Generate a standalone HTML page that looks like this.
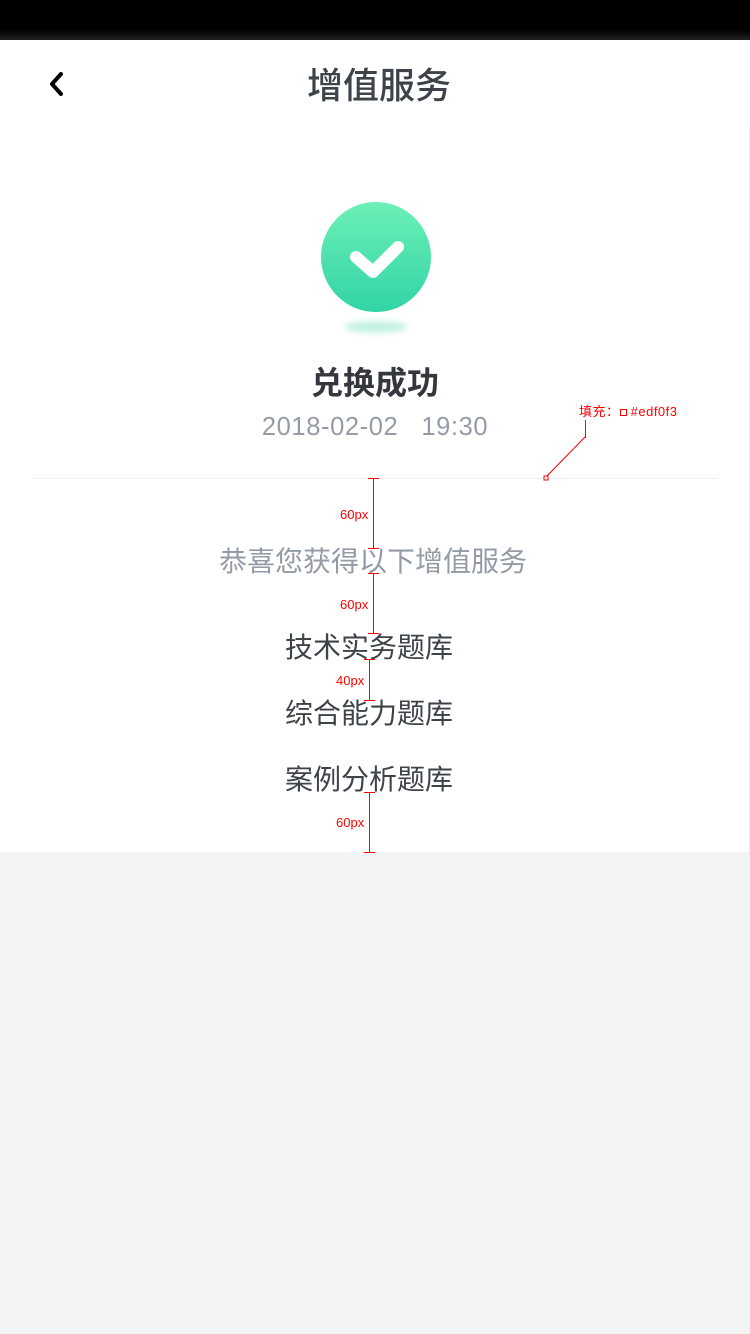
<!DOCTYPE html>
<html><head><meta charset="utf-8"><style>
*{margin:0;padding:0;box-sizing:border-box}
body{width:750px;height:1334px;background:#f2f3f5;position:relative;overflow:hidden;font-family:"Liberation Sans","Noto Sans CJK SC",sans-serif}
.a{position:absolute}
.t{position:absolute;left:0;width:750px;text-align:center;white-space:nowrap}
.r{position:absolute;background:#f00}
.rl{position:absolute;color:#f00;font-size:13px}
</style></head><body>
<div class="a" style="left:0;top:0;width:750px;height:40px;background:linear-gradient(#000 0,#000 30px,#222 40px)"></div>
<div class="a" style="left:0;top:40px;width:750px;height:88px;background:#fff;box-shadow:0 2px 6px rgba(0,0,0,0.05)"></div>
<svg class="a" style="left:46px;top:72px" width="20" height="24" viewBox="0 0 20 24"><path d="M15 2 L6 12 L15 22" fill="none" stroke="#000" stroke-width="4" stroke-linecap="round" stroke-linejoin="round"/></svg>
<div class="t" style="top:63px;left:4px;font-size:36px;line-height:46px;color:#3e434a;font-weight:500">增值服务</div>
<div class="a" style="left:0;top:128px;width:750px;height:724px;background:#fff;border-right:1px solid #eceef1"></div>
<div class="a" style="left:321px;top:202px;width:110px;height:110px;border-radius:50%;background:linear-gradient(#6df0b6,#31d4a6)"></div>
<svg class="a" style="left:321px;top:202px" width="110" height="110"><path d="M35 55 L52 70 L77 45" fill="none" stroke="#fff" stroke-width="12" stroke-linecap="round" stroke-linejoin="round"/></svg>
<div class="a" style="left:344px;top:321px;width:64px;height:12px;border-radius:50%;background:#c4f1e2;filter:blur(3px)"></div>
<div class="t" style="top:362px;font-size:32px;line-height:42px;color:#34383e;font-weight:600;">兑换成功</div>
<div class="t" style="top:411px;font-size:25.5px;line-height:32px;color:#949ba7;letter-spacing:0.6px">2018-02-02&nbsp;&nbsp;&nbsp;19:30</div>
<div class="a" style="left:32px;top:478px;width:686px;height:1px;background:#edf0f3"></div>
<div class="t" style="top:543px;left:-2px;font-size:28px;line-height:38px;color:#949ba7">恭喜您获得以下增值服务</div>
<div class="t" style="top:629px;left:-6px;font-size:28px;line-height:38px;color:#3e434a">技术实务题库</div>
<div class="t" style="top:695px;left:-6px;font-size:28px;line-height:38px;color:#3e434a">综合能力题库</div>
<div class="t" style="top:761px;left:-6px;font-size:28px;line-height:38px;color:#3e434a">案例分析题库</div>
<div class="rl" style="left:579px;top:401px;font-size:13px;letter-spacing:0.5px">填充：<span style="display:inline-block;width:7px;height:7px;border:1px solid #f00"></span> #edf0f3</div>
<div class="r" style="left:585px;top:420px;width:1px;height:18px"></div>
<svg class="a" style="left:543px;top:436px" width="45" height="45"><line x1="42" y1="1" x2="3" y2="41" stroke="#f00" stroke-width="1"/><rect x="1" y="40" width="4" height="4" fill="#fff" stroke="#f00"/></svg>
<div class="r" style="left:373px;top:478px;width:1px;height:70px"></div>
<div class="r" style="left:368px;top:478px;width:11px;height:1px"></div>
<div class="r" style="left:368px;top:548px;width:11px;height:1px"></div>
<div class="rl" style="left:340px;top:507px">60px</div>
<div class="r" style="left:373px;top:573px;width:1px;height:60px"></div>
<div class="r" style="left:368px;top:573px;width:11px;height:1px"></div>
<div class="r" style="left:368px;top:633px;width:11px;height:1px"></div>
<div class="rl" style="left:340px;top:597px">60px</div>
<div class="r" style="left:369px;top:659px;width:1px;height:41px"></div>
<div class="r" style="left:364px;top:659px;width:11px;height:1px"></div>
<div class="r" style="left:364px;top:700px;width:11px;height:1px"></div>
<div class="rl" style="left:336px;top:673px">40px</div>
<div class="r" style="left:369px;top:792px;width:1px;height:60px"></div>
<div class="r" style="left:364px;top:792px;width:11px;height:1px"></div>
<div class="r" style="left:364px;top:852px;width:11px;height:1px"></div>
<div class="rl" style="left:336px;top:815px">60px</div>
</body></html>
